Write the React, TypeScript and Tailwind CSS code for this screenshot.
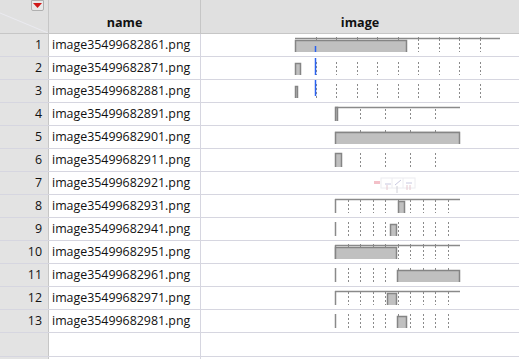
import React from "react";

type Bar = { x0: number; x1: number; y0: number };
type Chart = {
  x0: number;
  x1: number;
  n: number;
  topLine?: number;
  topTicks?: boolean;
  leftLine?: boolean;
  bar?: Bar;
  blue?: [number, number];
  tickY: [number, number];
};

const A = { x0: 94, x1: 299, n: 10 };
const B = { x0: 134, x1: 259, n: 5 };
const C = { x0: 134, x1: 259, n: 10 };

const charts: (Chart | null)[] = [
  { ...A, topLine: 4, topTicks: true, bar: { x0: 94, x1: 206, y0: 6 }, blue: [12, 18], tickY: [5, 18] },
  { ...A, bar: { x0: 94, x1: 100, y0: 6 }, blue: [1, 18], tickY: [5, 18] },
  { ...A, bar: { x0: 94, x1: 97, y0: 6 }, blue: [0, 16], tickY: [4, 18] },
  { ...B, topLine: 4, bar: { x0: 134, x1: 137, y0: 4 }, tickY: [6, 17] },
  { ...B, topLine: 6, topTicks: true, bar: { x0: 134, x1: 259, y0: 6 }, tickY: [4, 18] },
  { ...B, bar: { x0: 134, x1: 141, y0: 4 }, tickY: [4, 18] },
  null,
  { ...C, topLine: 4, leftLine: true, bar: { x0: 197, x1: 204, y0: 6 }, tickY: [5, 18] },
  { ...C, leftLine: true, bar: { x0: 189, x1: 196, y0: 6 }, tickY: [4, 18] },
  { ...C, topLine: 4, topTicks: true, leftLine: true, bar: { x0: 134, x1: 196, y0: 6 }, tickY: [5, 18] },
  { ...C, leftLine: true, bar: { x0: 196, x1: 259, y0: 6 }, tickY: [4, 18] },
  { ...C, topLine: 4, leftLine: true, bar: { x0: 186, x1: 196, y0: 6 }, tickY: [5, 18] },
  { ...C, leftLine: true, bar: { x0: 196, x1: 206, y0: 6 }, tickY: [4, 18] },
];

function ChartSvg({ c }: { c: Chart }) {
  const step = (c.x1 - c.x0) / c.n;
  const ticks = Array.from({ length: c.n - 1 }, (_, i) => Math.round(c.x0 + step * (i + 1)) + 0.5);
  return (
    <svg width={318} height={22} className="block">
      {ticks.map((x, i) => (
        <line key={i} x1={x} x2={x} y1={c.tickY[0]} y2={c.tickY[1]} stroke="#8a8a8a" strokeWidth={1} strokeDasharray="2 2" />
      ))}
      {c.topLine !== undefined && (
        <>
          <line x1={c.x0} x2={c.x1} y1={c.topLine + 0.5} y2={c.topLine + 0.5} stroke="#8a8a8a" strokeWidth={1.5} />
          {c.topTicks &&
            ticks.map((x, i) => (
              <line key={"t" + i} x1={x} x2={x} y1={c.topLine - 1} y2={c.topLine + 2} stroke="#8a8a8a" strokeWidth={1} />
            ))}
        </>
      )}
      {c.leftLine && <line x1={c.x0 + 0.5} x2={c.x0 + 0.5} y1={4} y2={18} stroke="#8a8a8a" strokeWidth={1.5} />}
      {c.bar && (
        <>
          <rect x={c.bar.x0} y={c.bar.y0} width={c.bar.x1 - c.bar.x0} height={18 - c.bar.y0} fill="#c0c0c0" />
          <path
            d={`M${c.bar.x0 + 0.5} 18 V${c.bar.y0 + 0.5} H${c.bar.x1 - 0.5} V18`}
            fill="none"
            stroke="#858585"
            strokeWidth={1.5}
          />
        </>
      )}
      {c.blue && <line x1={114.5} x2={114.5} y1={c.blue[0]} y2={c.blue[1]} stroke="#2a62f0" strokeWidth={1.5} />}
    </svg>
  );
}

function Thumb() {
  return (
    <svg width={318} height={22} className="block">
      <rect x={173} y={9} width={6} height={3} fill="#f3c0c8" />
      <rect x={180} y={6} width={34} height={10} fill="none" stroke="#ececf0" />
      <line x1={191} x2={191} y1={6} y2={16} stroke="#ececf0" />
      <line x1={202} x2={202} y1={6} y2={16} stroke="#ececf0" />
      <line x1={184} x2={190} y1={12} y2={12} stroke="#c8c8e0" />
      <line x1={194} x2={200} y1={13} y2={8} stroke="#c8c8e0" />
      <line x1={205} x2={211} y1={11} y2={11} stroke="#c8c8e0" />
      <line x1={186} x2={186} y1={13} y2={18} stroke="#e6c8d0" />
      <line x1={196} x2={196} y1={14} y2={21} stroke="#d0d0d8" />
      <line x1={206} x2={206} y1={13} y2={18} stroke="#e6c8d0" />
      <line x1={209} x2={209} y1={13} y2={18} stroke="#e6c8d0" />
    </svg>
  );
}

const names = Array.from({ length: 13 }, (_, i) => `image35499682${861 + i * 10}.png`);

export default function App() {
  const font = { fontFamily: '"Open Sans", "DejaVu Sans", sans-serif' };
  return (
    <div className="w-[519px] h-[359px] overflow-hidden bg-white text-[12.4px] text-[#111]" style={font}>
      <div className="flex h-[34px] bg-[#e0e0e0] border-b border-[#c6c6c6]">
        <div className="relative w-[49px] shrink-0 border-r border-[#c6c6c6] overflow-hidden">
          <svg width={48} height={33} className="absolute left-0 top-0">
            <line x1={0} y1={13} x2={48} y2={33} stroke="#eaeaf0" strokeWidth={1} />
          </svg>
          <div className="absolute left-[31px] top-0 w-[13px] h-[11px] border border-[#b0b0b0] rounded-b-[2px] bg-[#e8e8e8] flex items-center justify-center">
            <svg width={9} height={5}>
              <polygon points="0,0 9,0 4.5,5" fill="#d01818" />
            </svg>
          </div>
        </div>
        <div className="w-[152px] shrink-0 border-r border-[#c6c6c6] flex items-end justify-center pb-[3px] font-bold text-[12.6px] leading-none">name</div>
        <div className="flex-1 flex items-end justify-center pb-[3px] font-bold text-[12.6px] leading-none">image</div>
      </div>
      {names.map((n, i) => (
        <div key={i} className="flex h-[23px] border-b border-[#d6d6e0]">
          <div className="w-[49px] shrink-0 bg-[#e3e3e3] border-r border-[#c6c6c6] flex items-center justify-end pr-[6px]">{i + 1}</div>
          <div className="w-[152px] shrink-0 border-r border-[#d6d6e0] flex items-center pl-[3px]">{n}</div>
          <div className="flex-1">{charts[i] ? <ChartSvg c={charts[i]!} /> : <Thumb />}</div>
        </div>
      ))}
      <div className="flex h-[24px] border-b border-[#d6d6e0]">
        <div className="w-[49px] shrink-0 bg-[#e3e3e3] border-r border-[#c6c6c6]" />
        <div className="w-[152px] shrink-0 border-r border-[#d6d6e0]" />
        <div className="flex-1" />
      </div>
      <div className="flex h-[10px]">
        <div className="w-[49px] shrink-0 bg-[#e3e3e3] border-r border-[#c6c6c6]" />
        <div className="w-[152px] shrink-0 border-r border-[#d6d6e0]" />
        <div className="flex-1" />
      </div>
    </div>
  );
}
